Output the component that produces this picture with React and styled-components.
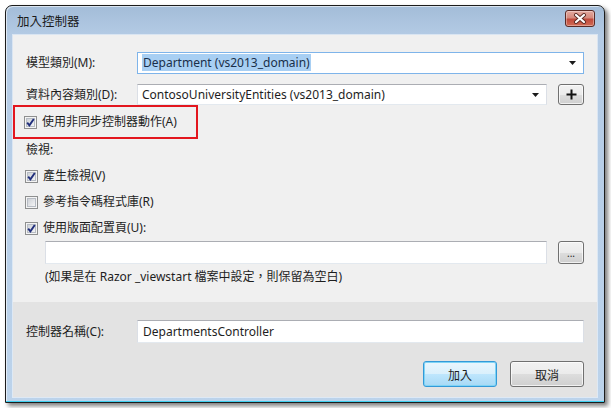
import React from 'react';
import styled, { createGlobalStyle } from 'styled-components';

const GlobalStyle = createGlobalStyle`
  body {
    margin: 0;
    background: #ffffff;
    font-family: "Noto Sans", "Noto Sans CJK TC", sans-serif;
    font-size: 12px;
    color: #1e1e1e;
  }
`

const Page = styled.div`
  width: 611px;
  height: 408px;
  padding: 5px 0 0 5px;
  box-sizing: border-box;
`

const Window = styled.div`
  width: 600px;
  height: 398px;
  box-sizing: border-box;
  border: 1px solid #1c1c1c;
  border-radius: 7px 7px 0 0;
  background: linear-gradient(#a3bcd8 0px, #b4cbe5 30px, #bcd3eb 100%);
  box-shadow: 3px 3px 4px rgba(0, 0, 0, 0.5), inset 0 -1px 0 #3fd0f0, inset 1px 1px 0 rgba(255, 255, 255, 0.6);
  display: flex;
  flex-direction: column;
  padding: 0 7px 5px 7px;
`

const TitleBar = styled.div`
  height: 29px;
  display: flex;
  align-items: center;
  justify-content: space-between;
  padding-left: 4px;
`

const Title = styled.span`
  font-family: "Noto Sans CJK TC", sans-serif;
  font-size: 12.5px;
  color: #1b1b1b;
  margin-top: -1px;
`

const CloseButton = styled.div`
  width: 30px;
  height: 17px;
  box-sizing: border-box;
  border: 1px solid #5a2a25;
  border-radius: 3px;
  margin-right: 2px;
  margin-top: -4px;
  background: linear-gradient(#e4a99f 0%, #d58a7d 45%, #c04a3c 55%, #d26c55 100%);
  box-shadow: inset 0 0 0 1px rgba(255, 255, 255, 0.35);
  display: flex;
  align-items: center;
  justify-content: center;
`

const Client = styled.div`
  flex: 1;
  display: flex;
  flex-direction: column;
  background: #f0f0f0;
  box-shadow: 0 0 0 1px rgba(255, 255, 255, 0.5);
`

const TopSection = styled.div`
  height: 267px;
  box-sizing: border-box;
  padding: 17px 13px 0 13px;
  display: flex;
  flex-direction: column;
`

const BottomSection = styled.div`
  flex: 1;
  background: #e3e3e3;
  padding: 18px 13px 0 13px;
  display: flex;
  flex-direction: column;
`

const FieldRow = styled.div`
  display: flex;
  align-items: center;
  margin-bottom: ${p => p.$gap || 0}px;
`

const Label = styled.span`
  width: 111px;
  flex-shrink: 0;
  white-space: nowrap;
  line-height: 16px;
`

const Combo = styled.div`
  height: ${p => p.$h || 22}px;
  width: ${p => p.$w}px;
  box-sizing: border-box;
  border: 1px solid ${p => (p.$focused ? '#7eb4ea' : '#abadb3')};
  border-left-color: ${p => (p.$focused ? '#7eb4ea' : '#dbdfe6')};
  border-right-color: ${p => (p.$focused ? '#7eb4ea' : '#dbdfe6')};
  border-bottom-color: ${p => (p.$focused ? '#7eb4ea' : '#e3e9ef')};
  background: #ffffff;
  display: flex;
  align-items: center;
  padding: 0 4px;
  white-space: nowrap;
`

const ComboText = styled.span`
  flex: 1;
  line-height: 16px;
`

const Selected = styled.span`
  background: #a8cff3;
  color: #1a2f4a;
  padding: 0 1px;
`

const Arrow = () => (
  <svg width="7" height="4" viewBox="0 0 7 4" style={{ marginRight: 3 }}>
    <path d="M0 0 H7 L3.5 4 Z" fill="#1a1a1a" />
  </svg>
)

const SmallButton = styled.div`
  width: 26px;
  height: ${p => p.$h || 22}px;
  box-sizing: border-box;
  margin-left: 11px;
  border: 1px solid #707070;
  border-radius: 3px;
  background: linear-gradient(#f2f2f2 0%, #ebebeb 50%, #dddddd 51%, #cfcfcf 100%);
  box-shadow: inset 0 0 0 1px rgba(255, 255, 255, 0.7);
  display: flex;
  align-items: center;
  justify-content: center;
  font-size: 10px;
  line-height: 10px;
`

const Highlight = styled.div`
  width: 185px;
  height: 34px;
  box-sizing: border-box;
  margin-left: -13px;
  border: 2px solid #e3161e;
  padding: 0 0 0 10px;
  display: flex;
  align-items: center;
`

const CheckRow = styled.div`
  display: flex;
  align-items: center;
  height: 16px;
  margin-left: ${p => p.$indent || -1}px;
  margin-bottom: ${p => p.$gap || 0}px;
`

const CheckText = styled.span`
  margin-left: 5px;
  line-height: 16px;
  white-space: nowrap;
`

const SectionLabel = styled.div`
  line-height: 16px;
  margin: 3px 0 10px;
`

const Checkbox = ({ checked }) => (
  <svg width="13" height="13" viewBox="0 0 13 13">
    <defs>
      <linearGradient id="cbfill" x1="0" y1="0" x2="1" y2="1">
        <stop offset="0" stopColor="#cbcfd5" />
        <stop offset="1" stopColor="#f7f7f7" />
      </linearGradient>
    </defs>
    <rect x="0.5" y="0.5" width="12" height="12" fill="#f4f4f4" stroke="#8e8f8f" />
    <rect x="2.5" y="2.5" width="8" height="8" fill="url(#cbfill)" stroke="#b7bcc4" />
    {checked && (
      <path d="M3.2 6.6 L5.4 9.4 L9.8 3" fill="none" stroke="#212f7c" strokeWidth="1.9" />
    )}
  </svg>
)

const PathRow = styled.div`
  display: flex;
  align-items: center;
  margin: 5px 0 0 19px;
`

const TextBox = styled.div`
  height: ${p => p.$h || 23}px;
  width: ${p => p.$w}px;
  box-sizing: border-box;
  border: 1px solid #abadb3;
  border-left-color: #dbdfe6;
  border-right-color: #dbdfe6;
  border-bottom-color: #e3e9ef;
  background: #ffffff;
  display: flex;
  align-items: center;
  padding: 0 5px;
  line-height: 16px;
`

const Note = styled.div`
  margin: 5px 0 0 19px;
  line-height: 16px;
  white-space: nowrap;
`

const ButtonBar = styled.div`
  display: flex;
  justify-content: flex-end;
  gap: 13px;
  margin-top: 18px;
`

const DialogButton = styled.div`
  width: 74px;
  height: 26px;
  box-sizing: border-box;
  border: 1px solid ${p => (p.$default ? '#3399d8' : '#707070')};
  border-radius: 3px;
  background: ${p =>
    p.$default
      ? 'linear-gradient(#eaf6fd 0%, #d9f0fc 50%, #bee6fd 51%, #a7d9f5 100%)'
      : 'linear-gradient(#f2f2f2 0%, #ebebeb 50%, #dddddd 51%, #cfcfcf 100%)'};
  box-shadow: inset 0 0 0 1px ${p => (p.$default ? '#7fd4f5' : 'rgba(255,255,255,0.7)')};
  display: flex;
  align-items: center;
  justify-content: center;
  font-family: "Noto Sans CJK TC", sans-serif;
`

export default function App() {
  return (
    <Page>
      <GlobalStyle />
      <Window>
        <TitleBar>
          <Title>加入控制器</Title>
          <CloseButton>
            <svg width="14" height="11" viewBox="0 0 14 11">
              <path d="M3 2 L11 9 M11 2 L3 9" stroke="#5b2a24" strokeWidth="4" strokeLinecap="round" />
              <path d="M3 2 L11 9 M11 2 L3 9" stroke="#ffffff" strokeWidth="2.2" strokeLinecap="round" />
            </svg>
          </CloseButton>
        </TitleBar>
        <Client>
          <TopSection>
            <FieldRow $gap={10}>
              <Label>模型類別(M):</Label>
              <Combo $w={447} $focused>
                <ComboText><Selected>Department (vs2013_domain)</Selected></ComboText>
                <Arrow />
              </Combo>
            </FieldRow>
            <FieldRow>
              <Label>資料內容類別(D):</Label>
              <Combo $w={410} $h={21}>
                <ComboText>ContosoUniversityEntities (vs2013_domain)</ComboText>
                <Arrow />
              </Combo>
              <SmallButton $h={21}>
                <svg width="11" height="11" viewBox="0 0 11 11">
                  <path d="M5.5 0.5 V10.5 M0.5 5.5 H10.5" stroke="#111" strokeWidth="2" />
                </svg>
              </SmallButton>
            </FieldRow>
            <Highlight>
              <CheckRow $indent={0}>
                <Checkbox checked />
                <CheckText>使用非同步控制器動作(A)</CheckText>
              </CheckRow>
            </Highlight>
            <SectionLabel>檢視:</SectionLabel>
            <CheckRow $gap={10}>
              <Checkbox checked />
              <CheckText>產生檢視(V)</CheckText>
            </CheckRow>
            <CheckRow $gap={10}>
              <Checkbox />
              <CheckText>參考指令碼程式庫(R)</CheckText>
            </CheckRow>
            <CheckRow>
              <Checkbox checked />
              <CheckText>使用版面配置頁(U):</CheckText>
            </CheckRow>
            <PathRow>
              <TextBox $w={502} />
              <SmallButton $h={23}>...</SmallButton>
            </PathRow>
            <Note>(如果是在 Razor _viewstart 檔案中設定，則保留為空白)</Note>
          </TopSection>
          <BottomSection>
            <FieldRow>
              <Label>控制器名稱(C):</Label>
              <TextBox $w={447}>DepartmentsController</TextBox>
            </FieldRow>
            <ButtonBar>
              <DialogButton $default>加入</DialogButton>
              <DialogButton>取消</DialogButton>
            </ButtonBar>
          </BottomSection>
        </Client>
      </Window>
    </Page>
  );
}
